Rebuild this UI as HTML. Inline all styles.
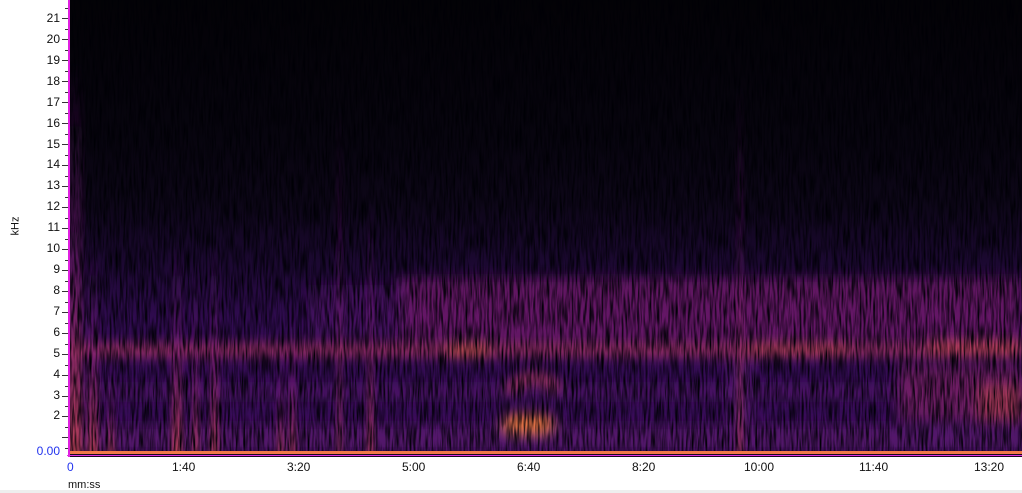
<!DOCTYPE html>
<html><head><meta charset="utf-8"><style>
body{margin:0;width:1022px;height:493px;background:#fff;position:relative;overflow:hidden;font-family:"Liberation Sans",sans-serif;}
.yl{position:absolute;right:962px;font-size:12px;color:#111;line-height:12px;text-align:right}
.xl{position:absolute;top:460px;font-size:12px;color:#111}
.tk{position:absolute;background:#333}
</style></head><body>
<svg style="position:absolute;left:68px;top:0" width="954" height="457" viewBox="0 0 954 457">
<defs>
<linearGradient id="v" x1="0" y1="0" x2="0" y2="1">
<stop offset="0" stop-color="#030206"/><stop offset="0.3" stop-color="#07040e"/><stop offset="0.45" stop-color="#0d0618"/>
<stop offset="0.58" stop-color="#1c0832"/><stop offset="0.7" stop-color="#300b50"/>
<stop offset="1" stop-color="#3a0c5a"/></linearGradient>
<linearGradient id="st" x1="0" y1="0" x2="0" y2="1">
<stop offset="0" stop-color="#6a1a80" stop-opacity="0"/><stop offset="0.5" stop-color="#8a2080" stop-opacity="0.5"/><stop offset="1" stop-color="#d04a50" stop-opacity="0.8"/></linearGradient>
<filter id="b6"><feGaussianBlur stdDeviation="6"/></filter>
<filter id="b3"><feGaussianBlur stdDeviation="3"/></filter>
<filter id="n" x="0" y="0" width="100%" height="100%" color-interpolation-filters="sRGB">
<feTurbulence type="fractalNoise" baseFrequency="0.5 0.04" numOctaves="2" seed="3"/>
<feColorMatrix values="0 0 0 0 0  0 0 0 0 0  0 0 0 0 0.02  0 0 0 -2.2 1.4"/></filter>
</defs>
<rect width="954" height="457" fill="url(#v)"/>
<g filter="url(#b6)">
<rect x="330" y="278" width="624" height="62" fill="#7a1c70" opacity="0.7"/>
<rect x="240" y="285" width="100" height="50" fill="#5a1570" opacity="0.5"/>
<rect x="0" y="344" width="954" height="12" fill="#b8386a" opacity="0.85"/>
<rect x="380" y="344" width="40" height="12" fill="#e05a50"/>
<rect x="680" y="344" width="100" height="10" fill="#d04a5a"/>
<rect x="860" y="342" width="94" height="12" fill="#d04a5a"/>
<rect x="0" y="386" width="954" height="12" fill="#5a1a70" opacity="0.7"/>
<rect x="830" y="365" width="124" height="55" fill="#8a2468" opacity="0.6"/>
<rect x="910" y="385" width="44" height="35" fill="#d0504a" opacity="0.5"/>
<rect x="0" y="425" width="954" height="26" fill="#5a1870" opacity="0.8"/>
<rect x="435" y="415" width="50" height="18" rx="9" fill="#f07a40"/>
<path d="M440 390 Q465 365 490 388" stroke="#c04060" stroke-width="8" fill="none"/>
<rect x="660" y="360" width="25" height="90" fill="#5a1a70" opacity="0.7"/>
</g>
<g filter="url(#b3)">
<rect x="0" y="60" width="14" height="395" fill="url(#st)"/>
<rect x="20" y="240" width="10" height="215" fill="url(#st)"/>
<rect x="40" y="360" width="6" height="95" fill="url(#st)"/>
<rect x="104" y="240" width="10" height="215" fill="url(#st)"/>
<rect x="125" y="260" width="5" height="195" fill="url(#st)"/>
<rect x="143" y="240" width="7" height="215" fill="url(#st)"/>
<rect x="210" y="340" width="5" height="115" fill="url(#st)"/>
<rect x="222" y="300" width="5" height="155" fill="url(#st)"/>
<rect x="270" y="100" width="3" height="355" fill="url(#st)"/>
<rect x="300" y="200" width="5" height="255" fill="url(#st)"/>
<rect x="670" y="80" width="4" height="375" fill="url(#st)"/>
</g>
<rect width="954" height="457" filter="url(#n)"/>
<rect x="0" y="451" width="954" height="3" fill="#f07848"/>
<rect x="0" y="454" width="954" height="3" fill="#1a0520"/>
<rect x="0" y="0" width="2" height="457" fill="#e020e0"/>
</svg>
<svg style="position:absolute;left:60px;top:0" width="8" height="460">
<g stroke="#333" stroke-width="1">
<path d="M2 18.5H8M2 39.5H8M2 60.5H8M2 81.5H8M2 102.5H8M2 123.5H8M2 144.5H8M2 165.5H8M2 186.5H8M2 207.5H8M2 228.5H8M2 249.5H8M2 270.5H8M2 291.5H8M2 312.5H8M2 333.5H8M2 354.5H8M2 375.5H8M2 396.5H8M2 416.5H8M2 437.5H8"/>
<path d="M5 8.5H8M5 29.5H8M5 50.5H8M5 71.5H8M5 92.5H8M5 113.5H8M5 134.5H8M5 155.5H8M5 176.5H8M5 197.5H8M5 218.5H8M5 239.5H8M5 260.5H8M5 281.5H8M5 302.5H8M5 323.5H8M5 344.5H8M5 365.5H8M5 386.5H8M5 406.5H8M5 427.5H8M5 448.5H8"/>
</g></svg>
<div class="tk" style="left:67px;top:455px;width:955px;height:1px;background:#e030e0"></div>
<div style="position:absolute;left:0;top:490px;width:1022px;height:3px;background:#eee"></div>
<div style="position:absolute;left:6px;top:220px;font-size:11px;transform:rotate(-90deg);transform-origin:center;color:#111">kHz</div>
<div class="yl" style="top:12px">21</div><div class="yl" style="top:33px">20</div><div class="yl" style="top:54px">19</div>
<div class="yl" style="top:75px">18</div><div class="yl" style="top:96px">17</div><div class="yl" style="top:117px">16</div>
<div class="yl" style="top:138px">15</div><div class="yl" style="top:158px">14</div><div class="yl" style="top:179px">13</div>
<div class="yl" style="top:200px">12</div><div class="yl" style="top:221px">11</div><div class="yl" style="top:242px">10</div>
<div class="yl" style="top:263px">9</div><div class="yl" style="top:284px">8</div><div class="yl" style="top:305px">7</div>
<div class="yl" style="top:326px">6</div><div class="yl" style="top:347px">5</div><div class="yl" style="top:368px">4</div>
<div class="yl" style="top:389px">3</div><div class="yl" style="top:409px">2</div>
<div class="yl" style="top:445px;color:#2233ee">0.00</div>
<div class="xl" style="left:67px;color:#2233ee">0</div>
<div class="xl" style="left:172px">1:40</div><div class="xl" style="left:287px">3:20</div><div class="xl" style="left:402px">5:00</div>
<div class="xl" style="left:517px">6:40</div><div class="xl" style="left:632px">8:20</div><div class="xl" style="left:744px">10:00</div>
<div class="xl" style="left:859px">11:40</div><div class="xl" style="left:974px">13:20</div>
<div style="position:absolute;left:68px;top:479px;font-size:11px;color:#111">mm:ss</div>
</body></html>
